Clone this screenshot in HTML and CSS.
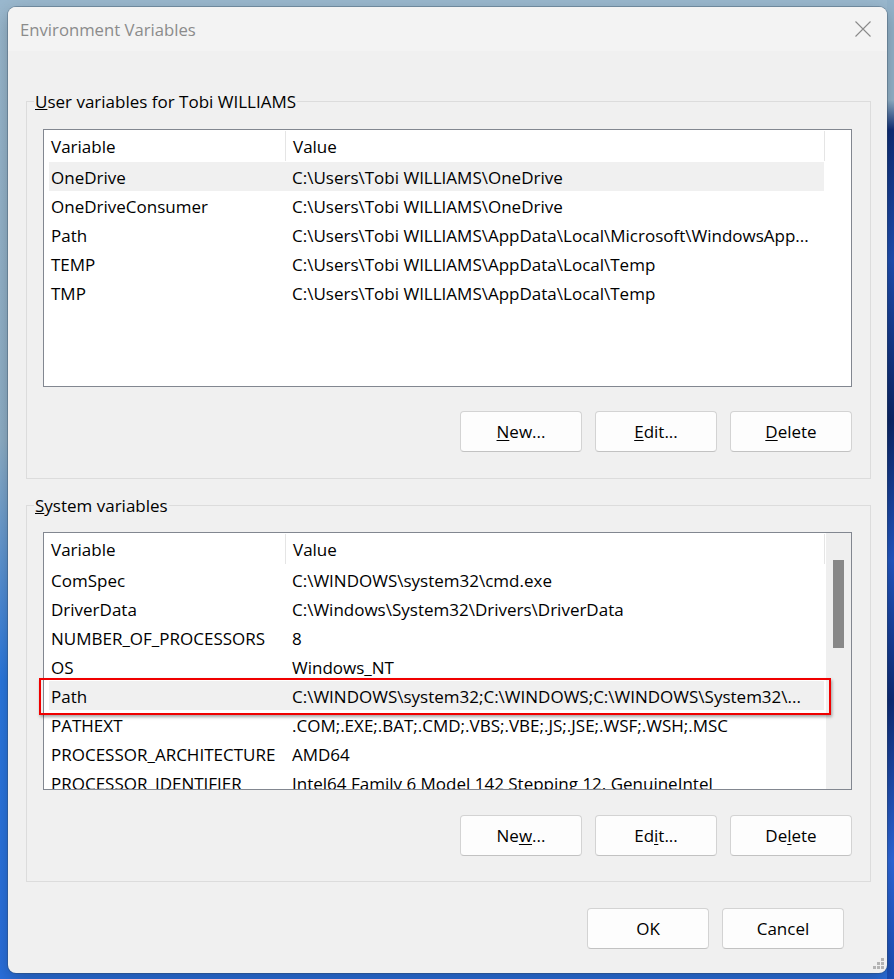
FILE: index.html
```html
<!DOCTYPE html>
<html lang="en">
<head>
<meta charset="utf-8">
<title>Environment Variables</title>
<link rel="stylesheet" href="styles.css">
</head>
<body>
<div class="window">
  <div class="titlebar">
    <span class="title">Environment Variables</span>
    <span class="close" aria-label="Close">
      <svg width="16" height="16" viewBox="0 0 16 16"><path d="M0.5 0.5 L15.5 15.5 M15.5 0.5 L0.5 15.5" stroke="#8a8a8a" stroke-width="1.1" fill="none"/></svg>
    </span>
  </div>
  <div class="content">
    <fieldset class="group group-user">
      <legend><u>U</u>ser variables for Tobi WILLIAMS</legend>
      <div class="group-body">
        <div class="listbox">
          <div class="lv">
            <div class="lv-head"><div class="h1">Variable</div><div class="h2">Value</div></div>
            <div class="row sel"><span class="c1">OneDrive</span><span class="c2">C:\Users\Tobi WILLIAMS\OneDrive</span></div>
            <div class="row"><span class="c1">OneDriveConsumer</span><span class="c2">C:\Users\Tobi WILLIAMS\OneDrive</span></div>
            <div class="row"><span class="c1">Path</span><span class="c2">C:\Users\Tobi WILLIAMS\AppData\Local\Microsoft\WindowsApp...</span></div>
            <div class="row"><span class="c1">TEMP</span><span class="c2">C:\Users\Tobi WILLIAMS\AppData\Local\Temp</span></div>
            <div class="row"><span class="c1">TMP</span><span class="c2">C:\Users\Tobi WILLIAMS\AppData\Local\Temp</span></div>
          </div>
        </div>
        <div class="btns btns-user">
          <button class="btn"><u>N</u>ew...</button>
          <button class="btn"><u>E</u>dit...</button>
          <button class="btn"><u>D</u>elete</button>
        </div>
      </div>
    </fieldset>

    <fieldset class="group group-sys">
      <legend><u>S</u>ystem variables</legend>
      <div class="group-body">
        <div class="list-wrap">
          <div class="listbox">
            <div class="lv">
              <div class="lv-head"><div class="h1">Variable</div><div class="h2">Value</div></div>
              <div class="row"><span class="c1">ComSpec</span><span class="c2">C:\WINDOWS\system32\cmd.exe</span></div>
              <div class="row"><span class="c1">DriverData</span><span class="c2">C:\Windows\System32\Drivers\DriverData</span></div>
              <div class="row"><span class="c1">NUMBER_OF_PROCESSORS</span><span class="c2">8</span></div>
              <div class="row"><span class="c1">OS</span><span class="c2">Windows_NT</span></div>
              <div class="row sel"><span class="c1">Path</span><span class="c2">C:\WINDOWS\system32;C:\WINDOWS;C:\WINDOWS\System32\...</span></div>
              <div class="row"><span class="c1">PATHEXT</span><span class="c2">.COM;.EXE;.BAT;.CMD;.VBS;.VBE;.JS;.JSE;.WSF;.WSH;.MSC</span></div>
              <div class="row"><span class="c1">PROCESSOR_ARCHITECTURE</span><span class="c2">AMD64</span></div>
              <div class="row"><span class="c1">PROCESSOR_IDENTIFIER</span><span class="c2">Intel64 Family 6 Model 142 Stepping 12, GenuineIntel</span></div>
            </div>
            <div class="vscroll"><div class="thumb"></div></div>
          </div>
          <div class="highlight"></div>
        </div>
        <div class="btns btns-sys">
          <button class="btn">Ne<u>w</u>...</button>
          <button class="btn">Ed<u>i</u>t...</button>
          <button class="btn">De<u>l</u>ete</button>
        </div>
      </div>
    </fieldset>

    <div class="dialog-btns">
      <button class="btn">OK</button>
      <button class="btn">Cancel</button>
    </div>
  </div>
  <svg class="grip" width="12" height="12" viewBox="0 0 12 12">
    <g fill="#b4b4b4">
      <rect x="8" y="0" width="3" height="3"/>
      <rect x="4" y="4" width="3" height="3"/><rect x="8" y="4" width="3" height="3"/>
      <rect x="0" y="8" width="3" height="3"/><rect x="4" y="8" width="3" height="3"/><rect x="8" y="8" width="3" height="3"/>
    </g>
  </svg>
</div>
</body>
</html>
```

FILE: styles.css
```css
html, body {
  margin: 0;
  padding: 0;
}
body {
  width: 894px;
  height: 979px;
  overflow: hidden;
  font-family: "Open Sans", "Noto Sans", sans-serif;
  font-size: 17px;
  color: #000;
  background:
    linear-gradient(180deg, #93b3ca 0px, #93b3ca 100px, #0f2e78 130px, #1f4fb4 260px, #0c2668 420px, #2258c6 560px, #0e2c78 700px, #2e6ae0 860px, #1a4fb8 979px) right top / 7px 100% no-repeat,
    linear-gradient(180deg, #9ab8ce 0px, #8fb0c8 440px, #5e95d2 560px, #2a78e0 680px, #2a6fdc 979px);
}

.window {
  position: relative;
  margin: 7px 0 0 8px;
  width: 879px;
  height: 966px;
  background: #f0f0f0;
  border-radius: 8px;
  box-shadow: 0 0 0 1px rgba(50, 70, 90, 0.35), 0 6px 18px rgba(0, 0, 0, 0.25);
  display: flex;
  flex-direction: column;
  overflow: hidden;
}

.titlebar {
  height: 44px;
  flex: none;
  background: #f3f3f3;
  display: flex;
  align-items: center;
  justify-content: space-between;
  padding: 0 16px 0 12px;
}
.title {
  color: #8b8b8b;
  font-size: 16.7px;
}
.close {
  display: flex;
  width: 16px;
  height: 16px;
}

.content {
  flex: 1;
  display: flex;
  flex-direction: column;
}

.group {
  margin: 0 16px 0 18px;
  padding: 0;
  border: 1px solid #dcdcdc;
  min-width: 0;
}
.group-user { margin-top: 38px; }
.group-sys { margin-top: 14px; }

.group legend {
  margin-left: 7px;
  padding: 0 1px;
  line-height: 25px;
  height: 24px;
}

.group-body {
  padding: 16px 18px 25px 16px;
}
.group-sys .group-body {
  padding-top: 15px;
}

.listbox {
  height: 256px;
  border: 1px solid #828790;
  background: #fff;
  display: flex;
  overflow: hidden;
}

.lv {
  width: 781px;
  flex: none;
}

.lv-head {
  display: flex;
  height: 32px;
}
.h1, .h2 {
  padding-left: 7px;
  border-right: 1px solid #e5e5e5;
  margin: 1px 0;
  height: 30px;
  line-height: 32px;
  overflow: hidden;
}
.h1 { width: 234px; }
.h2 { width: 531px; }

.row {
  display: flex;
  height: 29px;
  margin-left: 5px;
  width: 775px;
  white-space: nowrap;
}
.row.sel {
  background: #f0f0f0;
}
.c1, .c2 {
  height: 29px;
  line-height: 31px;
  overflow: hidden;
}
.c1 {
  width: 234px;
  padding-left: 2px;
  flex: none;
}
.c2 {
  padding-left: 7px;
  flex: 1;
}

.vscroll {
  flex: 1;
  margin-left: 1px;
  background: #efefef;
  padding: 27px 0 0 7px;
}
.thumb {
  width: 11px;
  height: 88px;
  background: #888888;
}

.list-wrap {
  position: relative;
}
.highlight {
  position: absolute;
  left: -4px;
  top: 146px;
  width: 788px;
  height: 33px;
  border: 2px solid #f00000;
  box-shadow: 1px 2px 3px rgba(0, 0, 0, 0.35);
  pointer-events: none;
}

.btns {
  display: flex;
  justify-content: flex-end;
  gap: 13px;
}
.btns-user { margin-top: 24px; margin-bottom: 1px; }
.btns-sys { margin-top: 25px; }

.btn {
  width: 122px;
  height: 41px;
  padding: 0;
  background: #fdfdfd;
  border: 1px solid #d3d3d3;
  border-bottom-color: #c2c2c2;
  border-radius: 4px;
  font-family: inherit;
  font-size: 17px;
  color: #000;
}
.btn u {
  text-underline-offset: 2px;
}

.dialog-btns {
  display: flex;
  justify-content: flex-end;
  gap: 13px;
  margin: 26px 43px 0 0;
}

.grip {
  position: absolute;
  right: 2px;
  bottom: 3px;
}
```
